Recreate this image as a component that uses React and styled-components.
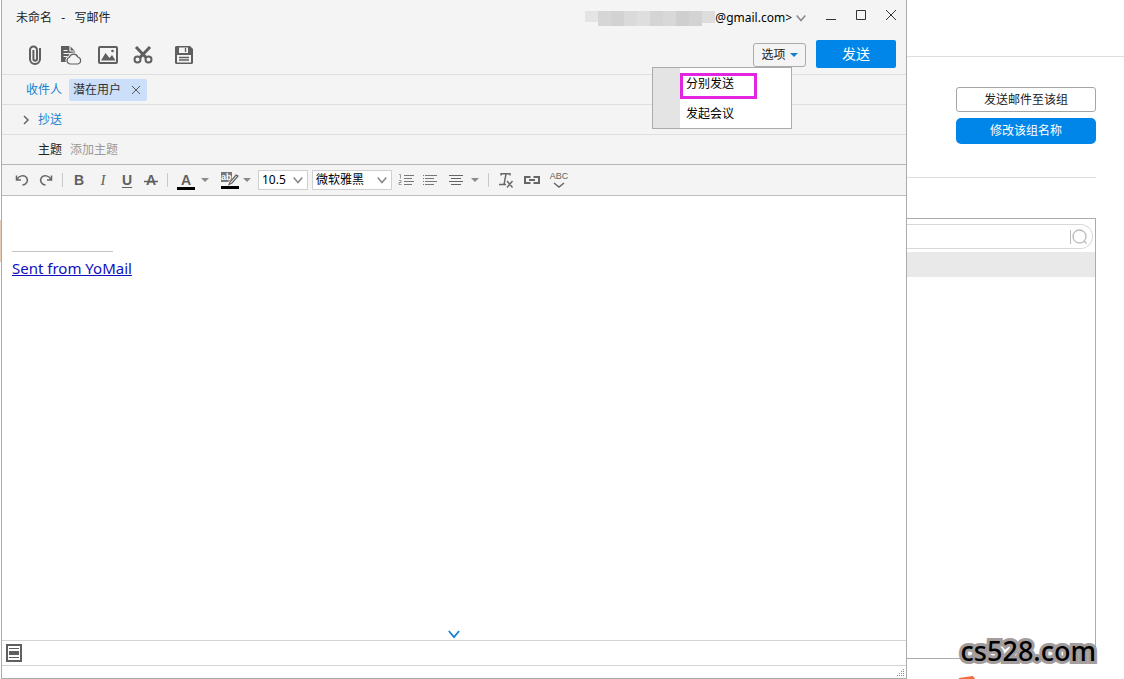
import React from 'react';
import styled, { createGlobalStyle } from 'styled-components';

const GlobalStyle = createGlobalStyle`
  * {
    box-sizing: border-box;
  }
  body {
    margin: 0;
    background: #fff;
    color: #222;
    font: 12px/16px 'Noto Sans', 'Noto Sans CJK SC', sans-serif;
  }
  button, input, select {
    font: inherit;
    color: inherit;
  }
  button {
    padding: 0;
    border: 0;
    background: none;
  }
  svg {
    display: block;
  }
`;

const mosaic = ['#e4e4e4', '#d6d6d6', '#d2d2d2', '#dadada', '#dedede', '#d4d4d4', '#d8d8d8', '#cfcfcf', '#d3d3d3', '#dddddd'];

const Chevron = ({ size = 10, color = '#888', width = 1.5 }) => (
  <svg width={size} height={size} viewBox="0 0 10 10" fill="none" stroke={color} strokeWidth={width}>
    <path d="M.7 2.5 5 7.5 9.3 2.5" />
  </svg>
);

const Triangle = ({ color = '#8a8a8a' }) => (
  <svg width="8" height="4" viewBox="0 0 8 4" fill={color}>
    <path d="M0 0h8L4 4z" />
  </svg>
);

const ClipIcon = () => (
  <svg width="20" height="20" viewBox="0 0 20 20" fill="none" stroke="#5f5f5f" strokeWidth="2">
    <path d="M15 3v11a5 5 0 0 1-10 0V5a3.5 3.5 0 0 1 7 0v9a1.8 1.8 0 0 1-3.6 0V5" />
  </svg>
);

const CloudDocIcon = () => (
  <svg width="22" height="20" viewBox="0 0 22 20">
    <path d="M1 1h9l5 5v5l-6 6H1z" fill="#5f5f5f" />
    <path d="M10 1v5h5M3.5 5.5h4M3.5 8.5h8M3.5 11.5h4" fill="none" stroke="#f4f4f4" strokeWidth="1.2" />
    <path
      d="M10 19a3.5 3.5 0 0 1-.5-6.8 4.3 4.3 0 0 1 8.2-.2A3.6 3.6 0 0 1 18 19z"
      fill="#f4f4f4"
      stroke="#f4f4f4"
      strokeWidth="3"
    />
    <path
      d="M10 19a3.5 3.5 0 0 1-.5-6.8 4.3 4.3 0 0 1 8.2-.2A3.6 3.6 0 0 1 18 19z"
      fill="#f4f4f4"
      stroke="#5f5f5f"
      strokeWidth="1.2"
    />
  </svg>
);

const ImageIcon = () => (
  <svg width="20" height="18" viewBox="0 0 20 18">
    <rect x="1" y="1" width="18" height="16" rx="1" fill="none" stroke="#5f5f5f" strokeWidth="2" />
    <path d="M3 14.5 7.5 7l4 5 2.5-3 3.5 5.5z" fill="#5f5f5f" />
    <circle cx="14.5" cy="5" r="1.3" fill="#5f5f5f" />
  </svg>
);

const ScissorsIcon = () => (
  <svg width="20" height="18" viewBox="0 0 20 18" fill="none" stroke="#5f5f5f">
    <path d="m3 1 10.5 11M17 1 6.5 12" strokeWidth="3" />
    <circle cx="4.5" cy="13.5" r="3" strokeWidth="2" />
    <circle cx="15.5" cy="13.5" r="3" strokeWidth="2" />
  </svg>
);

const SaveIcon = () => (
  <svg width="18" height="18" viewBox="0 0 18 18">
    <path d="M1 0h14l3 3v14l-1 1H1l-1-1V1z" fill="#5f5f5f" />
    <path d="M4 1.5h9V7H4zM2 9h14v7.5H2z" fill="#f4f4f4" />
    <path d="M10.5 2v4M4 11.5h10M4 14h10" stroke="#5f5f5f" strokeWidth="1.3" />
  </svg>
);

const UndoIcon = ({ redo }) => (
  <svg width="14" height="14" viewBox="0 0 14 14" fill="none" stroke="#666" strokeWidth="1.5">
    <g transform={redo ? 'matrix(-1 0 0 1 14 0)' : undefined}>
      <path d="M1.5 2.5V7H6M2 6.5C4 2.5 9 1.5 11.5 4.5c2 3 .5 7-4 7.5" />
    </g>
  </svg>
);

const StrikeIcon = () => (
  <svg width="14" height="14" viewBox="0 0 14 14">
    <text x="7" y="12" textAnchor="middle" fill="#606060" fontSize="14" fontWeight="bold" fontFamily="Liberation Sans, sans-serif">A</text>
    <path d="M0 8.5h14" stroke="#606060" strokeWidth="1.5" />
  </svg>
);

const HighlightIcon = () => (
  <svg width="18" height="17" viewBox="0 0 18 17">
    <path d="M0 0h11v10H0z" fill="#777" />
    <text x="0" y="8" fill="#fff" fontSize="9" fontWeight="bold" fontFamily="Liberation Sans, sans-serif">ab</text>
    <path d="M16 4 11 10l-3 1" fill="none" stroke="#f4f4f4" strokeWidth="4" />
    <path d="M17 4 11 11l-3 1.5L9 10l6-7z" fill="none" stroke="#666" strokeWidth="1.2" />
    <path d="M0 14h18v3H0z" fill="#000" />
  </svg>
);

const ListIcon = ({ ordered }) => (
  <svg width="16" height="12" viewBox="0 0 16 12" stroke="#777">
    <path d={ordered ? 'M6 1.5h10M6 4.5h8M6 7.5h10M6 10.5h8' : 'M3 1.5h12M3 4.5h9M3 7.5h12M3 10.5h9'} />
    {ordered ? (
      <path d="M1 .5h1.5v4M1 6.5h2v2h-2v2h2.5" fill="none" strokeWidth=".7" />
    ) : (
      <path d="M1 1.5h1M1 4.5h1M1 7.5h1M1 10.5h1" />
    )}
  </svg>
);

const AlignIcon = () => (
  <svg width="14" height="12" viewBox="0 0 14 12" stroke="#666">
    <path d="M0 1.5h14M2 4.5h10M0 7.5h14M2 10.5h10" />
  </svg>
);

const ClearIcon = () => (
  <svg width="16" height="17" viewBox="0 0 16 17" fill="none" stroke="#666" strokeWidth="1.4">
    <path d="M3 3.5V1.7h9v1.8M8 2 6 12.5M1 12.5h7M9 9l5.5 6.5M14.5 9 9 15.5" />
  </svg>
);

const LinkIcon = () => (
  <svg width="16" height="10" viewBox="0 0 16 10" fill="none" stroke="#666" strokeWidth="2">
    <path d="M6.5 2H1v6h5.5M9.5 2H15v6H9.5M5 5h6" />
  </svg>
);

const Page = styled.div`
  position: relative;
  display: flex;
  min-height: 100vh;
  overflow: hidden;
`;

const Sliver = styled.div`
  flex: none;
  width: 1px;
  padding-top: 220px;
  &::before {
    content: '';
    display: block;
    height: 42px;
    background: #e5cdb5;
  }
`;

const Composer = styled.main`
  flex: 1;
  min-width: 0;
  display: flex;
  flex-direction: column;
  border: solid #ababab;
  border-width: 0 1px 1px;
`;

const TitleBar = styled.header`
  display: flex;
  align-items: center;
  height: 34px;
  padding: 2px 9px 0 14px;
  background: #f4f4f4;
`;

const Title = styled.h1`
  flex: 1;
  margin: 0;
  font-size: 12px;
  font-weight: 400;
  white-space: pre;
`;

const Account = styled.button`
  display: flex;
  align-items: center;
  margin-right: 19px;
  color: #000;
  svg {
    margin-left: 4px;
  }
`;

const Masked = styled.span`
  display: flex;
  height: 15px;
`;

const MaskBlock = styled.span`
  width: 13px;
  background: ${({ $tone }) => $tone};
  &:first-child {
    height: 11px;
  }
  &:last-child {
    height: 12px;
  }
`;

const WindowButtons = styled.div`
  display: flex;
  align-items: center;
  gap: 18px;
  padding-bottom: 6px;
`;

const ToolBar = styled.div`
  display: flex;
  align-items: center;
  height: 41px;
  padding: 0 10px 0 18px;
  background: #f4f4f4;
  border-bottom: 1px solid #dedede;
`;

const ToolButton = styled.button`
  display: flex;
  align-items: center;
  justify-content: center;
  width: ${({ $w }) => $w}px;
  height: 28px;
  padding-top: 2px;
`;

const Actions = styled.div`
  display: flex;
  align-items: center;
  gap: 10px;
  margin-left: auto;
`;

const OptionsWrap = styled.div`
  position: relative;
  padding-top: 2px;
`;

const OptionsButton = styled.button`
  display: flex;
  align-items: center;
  justify-content: center;
  gap: 4px;
  width: 53px;
  height: 24px;
  border: 1px solid #ababab;
  border-radius: 3px;
`;

const SendButton = styled.button`
  width: 80px;
  height: 28px;
  border-radius: 2px;
  background: #0086e8;
  color: #fff;
  font-size: 14px;
`;

const Menu = styled.div`
  position: absolute;
  z-index: 2;
  top: 26px;
  right: 14px;
  display: flex;
  flex-direction: column;
  gap: 2px;
  width: 140px;
  padding: 5px 0 1px 27px;
  border: 1px solid #ababab;
  background: linear-gradient(to right, #e4e4e4 27px, #fff 27px);
`;

const MenuItem = styled.button`
  display: flex;
  align-items: center;
  width: ${({ $marked }) => ($marked ? '77px' : '100%')};
  height: 26px;
  padding: ${({ $marked }) => ($marked ? '0 3px 4px' : '0 6px')};
  border: ${({ $marked }) => ($marked ? '3px solid #e324e0' : 0)};
  color: #000;
`;

const FieldRow = styled.div`
  display: flex;
  align-items: center;
  height: 30px;
  padding-left: ${({ $indent }) => $indent}px;
  background: #f4f4f4;
  border-bottom: 1px solid ${({ $last }) => ($last ? '#b5b5b5' : '#dedede')};
`;

const FieldButton = styled.button`
  display: flex;
  align-items: center;
  gap: 6px;
  color: #1580d0;
`;

const Chip = styled.span`
  display: flex;
  align-items: center;
  gap: 10px;
  height: 22px;
  margin-left: 7px;
  padding: 0 6px 0 4px;
  border-radius: 2px;
  background: #cbdefa;
  color: #333;
`;

const SubjectInput = styled.input`
  flex: 1;
  margin-left: 8px;
  border: 0;
  padding: 0;
  background: none;
  outline: 0;
  &::placeholder {
    color: #999;
  }
`;

const FormatBar = styled.div`
  display: flex;
  align-items: center;
  height: 31px;
  padding-left: 8px;
  background: #f4f4f4;
  border-bottom: 1px solid #bdbdbd;
`;

const FormatButton = styled.button`
  display: flex;
  align-items: center;
  justify-content: center;
  width: ${({ $w = 24 }) => $w}px;
  height: 24px;
  margin-right: ${({ $after = 0 }) => $after}px;
  color: #606060;
`;

const Glyph = styled.span`
  font: ${({ $italic }) => ($italic ? "italic 15px/16px 'Liberation Serif', serif" : "bold 14px/16px 'Liberation Sans', sans-serif")};
  text-decoration: ${({ $line = 'none' }) => $line};
  text-underline-offset: 2px;
`;

const ColorGlyph = styled.span`
  width: 18px;
  height: 19px;
  border-bottom: 3px solid #000;
  font: bold 14px/18px 'Liberation Sans', sans-serif;
`;

const SpellGlyph = styled.span`
  display: flex;
  flex-direction: column;
  align-items: center;
  font: 9px/9px 'Liberation Sans', sans-serif;
`;

const Separator = styled.span`
  width: 1px;
  height: 14px;
  margin: 0 4px;
  background: #c8c8c8;
`;

const SelectWrap = styled.span`
  display: grid;
  align-items: center;
  width: ${({ $w }) => $w}px;
  height: 20px;
  margin-right: ${({ $after }) => $after}px;
  border: 1px solid #d0d0d0;
  background: #fff;
  color: #000;
  > * {
    grid-area: 1 / 1;
  }
  svg {
    justify-self: end;
    margin-right: 4px;
    pointer-events: none;
  }
`;

const Select = styled.select`
  appearance: none;
  width: 100%;
  height: 18px;
  padding: 0 3px;
  border: 0;
  background: none;
  outline: 0;
`;

const Editor = styled.div`
  flex: 1;
  padding: 55px 10px 0;
  outline: 0;
`;

const SignatureLine = styled.div`
  width: 101px;
  height: 1px;
  margin-bottom: 7px;
  background: #c4c4c4;
`;

const SignatureLink = styled.a`
  color: #0f0fc0;
  font-size: 15px;
  line-height: 18px;
`;

const Expand = styled.button`
  align-self: center;
`;

const StatusBar = styled.div`
  display: flex;
  align-items: center;
  height: 26px;
  padding-left: 4px;
  border: solid #d4d4d4;
  border-width: 1px 0;
`;

const Footer = styled.div`
  display: flex;
  align-items: flex-end;
  justify-content: flex-end;
  height: 12px;
  padding: 1px;
`;

const Side = styled.aside`
  flex: none;
  display: flex;
  flex-direction: column;
  width: 217px;
`;

const SideTop = styled.div`
  height: 57px;
  border-bottom: 1px solid #dedede;
`;

const SideActions = styled.div`
  display: flex;
  flex-direction: column;
  align-items: flex-end;
  gap: 6px;
  height: 121px;
  margin-right: 28px;
  padding-top: 30px;
  border-bottom: 1px solid #dedede;
`;

const SideButton = styled.button`
  width: 140px;
  height: ${({ $primary }) => ($primary ? 26 : 25)}px;
  border: ${({ $primary }) => ($primary ? 0 : '1px solid #a5a5a5')};
  border-radius: ${({ $primary }) => ($primary ? 5 : 3)}px;
  background: ${({ $primary }) => ($primary ? '#0086e8' : '#fff')};
  color: ${({ $primary }) => ($primary ? '#fff' : '#222')};
`;

const Contacts = styled.section`
  flex: 1;
  margin: 40px 28px 20px 0;
  border: solid #ababab;
  border-width: 1px 1px 1px 0;
`;

const Search = styled.label`
  display: flex;
  align-items: center;
  height: 25px;
  margin: 5px 2px 3px 0;
  padding-right: 4px;
  border: solid #d8d8d8;
  border-width: 1px 1px 1px 0;
  border-radius: 0 13px 13px 0;
  input {
    flex: 1;
    min-width: 0;
    border: 0;
    outline: 0;
    background: none;
  }
`;

const SelectedRow = styled.div`
  height: 25px;
  background: #e9e9e9;
`;

const Watermark = styled.div`
  position: absolute;
  right: 28px;
  bottom: 10px;
  color: #000;
  font: 500 27px/36px 'Noto Sans', sans-serif;
  -webkit-text-stroke: 6px #a39c9c;
  paint-order: stroke fill;
`;

const OrangeMark = styled.svg`
  position: absolute;
  right: 149px;
  bottom: 0;
`;

const tools = [
  { label: '附件', icon: <ClipIcon />, width: 30 },
  { label: '云附件', icon: <CloudDocIcon />, width: 42 },
  { label: '图片', icon: <ImageIcon />, width: 32 },
  { label: '截图', icon: <ScissorsIcon />, width: 38 },
  { label: '保存', icon: <SaveIcon />, width: 44 },
];

const ComposeWindow = () => (
  <Composer>
    <TitleBar>
      <Title>{'未命名   -   写邮件'}</Title>
      <Account>
        <Masked>
          {mosaic.map((tone, i) => (
            <MaskBlock key={i} $tone={tone} />
          ))}
        </Masked>
        <span>@gmail.com&gt;</span>
        <Chevron />
      </Account>
      <WindowButtons>
        <button aria-label="最小化">
          <svg width="12" height="12" viewBox="0 0 12 12" stroke="#333">
            <path d="M1 10.5h10" />
          </svg>
        </button>
        <button aria-label="最大化">
          <svg width="12" height="12" viewBox="0 0 12 12" fill="none" stroke="#333">
            <path d="M1.5 1.5h9v9h-9z" />
          </svg>
        </button>
        <button aria-label="关闭">
          <svg width="12" height="12" viewBox="0 0 12 12" stroke="#333">
            <path d="m1 1 10 10M11 1 1 11" />
          </svg>
        </button>
      </WindowButtons>
    </TitleBar>

    <ToolBar>
      {tools.map(({ label, icon, width }) => (
        <ToolButton key={label} aria-label={label} $w={width}>
          {icon}
        </ToolButton>
      ))}
      <Actions>
        <OptionsWrap>
          <OptionsButton>
            选项
            <Triangle color="#1580d0" />
          </OptionsButton>
          <Menu>
            <MenuItem $marked>分别发送</MenuItem>
            <MenuItem>发起会议</MenuItem>
          </Menu>
        </OptionsWrap>
        <SendButton>发送</SendButton>
      </Actions>
    </ToolBar>

    <FieldRow $indent={24}>
      <FieldButton>收件人</FieldButton>
      <Chip>
        潜在用户
        <button aria-label="移除">
          <svg width="10" height="10" viewBox="0 0 10 10" stroke="#555">
            <path d="m1 1 8 8M9 1 1 9" />
          </svg>
        </button>
      </Chip>
    </FieldRow>
    <FieldRow $indent={20}>
      <FieldButton>
        <svg width="10" height="10" viewBox="0 0 10 10" fill="none" stroke="#666" strokeWidth="1.5">
          <path d="m2 1 4 4-4 4" />
        </svg>
        抄送
      </FieldButton>
    </FieldRow>
    <FieldRow $indent={36} $last>
      <label htmlFor="subject">主题</label>
      <SubjectInput id="subject" placeholder="添加主题" />
    </FieldRow>

    <FormatBar>
      <FormatButton aria-label="撤销"><UndoIcon /></FormatButton>
      <FormatButton aria-label="重做"><UndoIcon redo /></FormatButton>
      <Separator />
      <FormatButton><Glyph>B</Glyph></FormatButton>
      <FormatButton><Glyph $italic>I</Glyph></FormatButton>
      <FormatButton><Glyph $line="underline">U</Glyph></FormatButton>
      <FormatButton aria-label="删除线"><StrikeIcon /></FormatButton>
      <Separator />
      <FormatButton $w={28}><ColorGlyph>A</ColorGlyph></FormatButton>
      <FormatButton $w={10} $after={8} aria-label="文字颜色"><Triangle /></FormatButton>
      <FormatButton aria-label="突出显示"><HighlightIcon /></FormatButton>
      <FormatButton $w={10} $after={6} aria-label="突出显示颜色"><Triangle /></FormatButton>
      <SelectWrap $w={50} $after={4}>
        <Select aria-label="字号">
          <option>10.5</option>
        </Select>
        <Chevron />
      </SelectWrap>
      <SelectWrap $w={80} $after={2}>
        <Select aria-label="字体">
          <option>微软雅黑</option>
        </Select>
        <Chevron />
      </SelectWrap>
      <FormatButton aria-label="编号列表"><ListIcon ordered /></FormatButton>
      <FormatButton aria-label="项目列表"><ListIcon /></FormatButton>
      <FormatButton $w={28} aria-label="对齐"><AlignIcon /></FormatButton>
      <FormatButton $w={10} $after={4} aria-label="对齐方式"><Triangle /></FormatButton>
      <Separator />
      <FormatButton $w={26} aria-label="清除格式"><ClearIcon /></FormatButton>
      <FormatButton $w={26} aria-label="链接"><LinkIcon /></FormatButton>
      <FormatButton $w={28}>
        <SpellGlyph>
          ABC
          <svg width="12" height="8" viewBox="0 0 12 8" fill="none" stroke="#666" strokeWidth="1.5">
            <path d="m1 2 5 4 5-4" />
          </svg>
        </SpellGlyph>
      </FormatButton>
    </FormatBar>

    <Editor>
      <SignatureLine />
      <SignatureLink href="#yomail">Sent from YoMail</SignatureLink>
    </Editor>
    <Expand aria-label="展开">
      <Chevron size={12} color="#1580d0" />
    </Expand>
    <StatusBar>
      <button aria-label="模板">
        <svg width="16" height="18" viewBox="0 0 16 18">
          <path d="M1 1h14v16H1z" fill="#fff" stroke="#5f5f5f" strokeWidth="2" />
          <path d="M3 7h10v4H3z" fill="#5f5f5f" />
          <path d="M3 4.5h10M3 13.5h10" stroke="#5f5f5f" />
        </svg>
      </button>
    </StatusBar>
    <Footer>
      <svg width="8" height="8" viewBox="0 0 8 8" fill="#888">
        <path d="M6 0h1v1H6zM4 2h1v1H4zM6 2h1v1H6zM2 4h1v1H2zM4 4h1v1H4zM6 4h1v1H6zM0 6h1v1H0zM2 6h1v1H2zM4 6h1v1H4zM6 6h1v1H6z" />
      </svg>
    </Footer>
  </Composer>
);

export default () => (
  <>
    <GlobalStyle />
    <Page>
      <Sliver />
      <ComposeWindow />
      <Side>
        <SideTop />
        <SideActions>
          <SideButton>发送邮件至该组</SideButton>
          <SideButton $primary>修改该组名称</SideButton>
        </SideActions>
        <Contacts>
          <Search>
            <input type="search" aria-label="搜索" />
            <svg width="18" height="16" viewBox="0 0 18 16" fill="none" stroke="#bbb">
              <path d="M.5 1v14" />
              <circle cx="9.5" cy="7.5" r="6.5" strokeWidth="1.3" />
              <path d="m14 12 2.5 2.5" strokeWidth="1.5" />
            </svg>
          </Search>
          <SelectedRow />
        </Contacts>
      </Side>
      <Watermark>cs528.com</Watermark>
      <OrangeMark width="16" height="3" viewBox="0 0 16 3">
        <path d="M0 3V2L14 0l2 3z" fill="#f26b3c" />
      </OrangeMark>
    </Page>
  </>
);
